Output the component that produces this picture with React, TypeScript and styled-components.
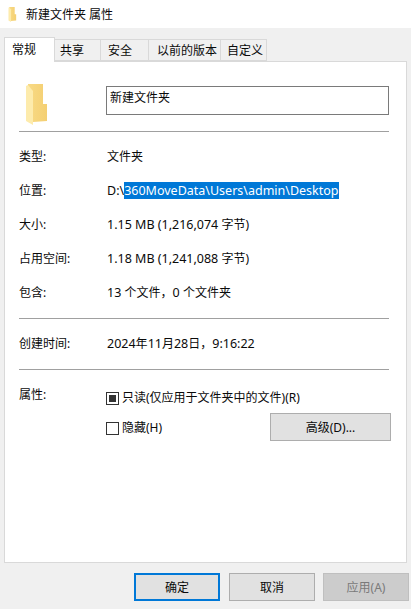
import React from "react";
import styled, { createGlobalStyle } from "styled-components";

const Global = createGlobalStyle`
  html, body { margin: 0; padding: 0; background: #f0f0f0; }
  body { font-family: "Noto Sans", "Noto Sans CJK SC", sans-serif; font-size: 12px; color: #0a0a0a; }
  #root { width: 411px; height: 609px; overflow: hidden; }
`;

const Dialog = styled.div`
  width: 411px;
  height: 609px;
  display: flex;
  flex-direction: column;
  background: #f0f0f0;
`;
const TitleBar = styled.div`
  height: 28px;
  background: #fff;
  display: flex;
  align-items: center;
  gap: 9px;
  padding-left: 8px;
  flex: none;
`;
const TabStrip = styled.div`
  height: 33px;
  flex: none;
  display: flex;
  align-items: flex-end;
  padding: 0 0 0 4px;
  box-sizing: border-box;
  position: relative;
  z-index: 1;
`;
const Tab = styled.div<{ $w: number; $pad: number; $active?: boolean }>`
  width: ${(p) => p.$w}px;
  height: ${(p) => (p.$active ? 25 : 22)}px;
  box-sizing: border-box;
  border: 1px solid #d9d9d9;
  border-left-width: ${(p) => (p.$active ? 1 : 0)}px;
  border-bottom: ${(p) => (p.$active ? "none" : "1px solid #d9d9d9")};
  background: ${(p) => (p.$active ? "#fff" : "#f0f0f0")};
  margin-bottom: ${(p) => (p.$active ? -1 : 0)}px;
  display: flex;
  align-items: center;
  white-space: nowrap;
  padding-left: ${(p) => p.$pad}px;
  padding-bottom: ${(p) => (p.$active ? 3 : 0)}px;
`;
const Panel = styled.div`
  margin: 0 4px;
  width: 403px;
  height: 502px;
  flex: none;
  box-sizing: border-box;
  border: 1px solid #d9d9d9;
  background: #fff;
  padding: 0 17px 0 14px;
  display: flex;
  flex-direction: column;
`;
const Header = styled.div`
  height: 69px;
  flex: none;
  display: flex;
  align-items: flex-start;
  padding-top: 22px;
  box-sizing: border-box;
`;
const IconSlot = styled.div`
  width: 87px;
  padding-left: 7px;
  box-sizing: border-box;
  flex: none;
`;
const NameInput = styled.div`
  width: 283px;
  height: 29px;
  margin-top: 2px;
  box-sizing: border-box;
  border: 1px solid #7a7a7a;
  padding: 0 3px;
  line-height: 22px;
`;
const Rule = styled.div`
  height: 1px;
  flex: none;
  background: #a0a0a0;
`;
const Group = styled.div<{ $h: number }>`
  height: ${(p) => p.$h}px;
  flex: none;
  padding-top: 16px;
  box-sizing: border-box;
`;
const Row = styled.div`
  height: 34px;
  display: flex;
  align-items: flex-start;
  line-height: 18px;
`;
const Label = styled.div`
  width: 88px;
  flex: none;
`;
const AttrLabel = styled(Label)`
  width: 87px;
  line-height: 14px;
`;
const Latin = styled.span`
  font-size: 12.5px;
`;
const Selected = styled.span`
  background: #0078d7;
  color: #fff;
`;
const AttrGrid = styled.div`
  display: flex;
  padding-top: 18px;
`;
const AttrCol = styled.div`
  flex: 1;
  display: flex;
  flex-direction: column;
`;
const CheckRow = styled.div<{ $drop?: number }>`
  display: flex;
  align-items: center;
  gap: 3px;
  height: 20px;
  line-height: 20px;
  padding-top: ${(p) => p.$drop ?? 0}px;
`;
const CheckBox = styled.div<{ $mixed?: boolean }>`
  width: 13px;
  height: 13px;
  box-sizing: border-box;
  border: 1px solid #333;
  background: #fff;
  display: flex;
  align-items: center;
  justify-content: center;
  &::after {
    content: "";
    width: 7px;
    height: 7px;
    background: ${(p) => (p.$mixed ? "#333" : "transparent")};
  }
`;
const SecondLine = styled.div`
  display: flex;
  justify-content: space-between;
  align-items: center;
  margin: 5px -2px 0 0;
`;
const Button = styled.div<{ $w?: number; $focus?: boolean; $disabled?: boolean }>`
  width: ${(p) => p.$w ?? 86}px;
  height: 28px;
  box-sizing: border-box;
  border: ${(p) => (p.$focus ? "2px solid #0078d7" : p.$disabled ? "1px solid #bfbfbf" : "1px solid #adadad")};
  background: ${(p) => (p.$disabled ? "#cccccc" : "#e1e1e1")};
  color: ${(p) => (p.$disabled ? "#7a7a7a" : "#0a0a0a")};
  margin-right: ${(p) => (p.$focus ? 1 : 0)}px;
  display: flex;
  align-items: center;
  justify-content: center;
`;
const Footer = styled.div`
  flex: 1;
  display: flex;
  justify-content: flex-end;
  gap: 8px;
  padding: 10px 2px 0 0;
  box-sizing: border-box;
`;

const Folder: React.FC<{ w: number; h: number; id: string }> = ({ w, h, id }) => (
  <svg width={w} height={h} viewBox="0 0 22 41" style={{ display: "block" }}>
    <defs>
      <linearGradient id={id} x1="0" y1="0" x2="1" y2="0">
        <stop offset="0" stopColor="#f8da85" />
        <stop offset="1" stopColor="#f4cf72" />
      </linearGradient>
    </defs>
    <path d="M2 0 L17 0 L17 20 L21 20 L21 37 L7 38 L2 36 Z" fill={`url(#${id})`} />
    <path d="M0 2 L2 1 L7 7 L7 41 L0 37 Z" fill="#fdebac" />
  </svg>
);

export default function App() {
  return (
    <Dialog>
      <Global />
      <TitleBar>
        <Folder w={9} h={15} id="fs" />
        <span>新建文件夹 属性</span>
      </TitleBar>
      <TabStrip>
        <Tab $w={51} $pad={7} $active>常规</Tab>
        <Tab $w={46} $pad={5}>共享</Tab>
        <Tab $w={48} $pad={7}>安全</Tab>
        <Tab $w={72} $pad={8}>以前的版本</Tab>
        <Tab $w={46} $pad={6}>自定义</Tab>
      </TabStrip>
      <Panel>
        <Header>
          <IconSlot><Folder w={22} h={41} id="fl" /></IconSlot>
          <NameInput>新建文件夹</NameInput>
        </Header>
        <Rule />
        <Group $h={186}>
          <Row><Label>类型:</Label>文件夹</Row>
          <Row><Label>位置:</Label><Latin>D:\<Selected>360MoveData\Users\admin\Desktop</Selected></Latin></Row>
          <Row><Label>大小:</Label><span><Latin>1.15 MB (1,216,074 </Latin>字节)</span></Row>
          <Row><Label>占用空间:</Label><span><Latin>1.18 MB (1,241,088 </Latin>字节)</span></Row>
          <Row><Label>包含:</Label><span><Latin>13 </Latin>个文件，<Latin>0 </Latin>个文件夹</span></Row>
        </Group>
        <Rule />
        <Group $h={50}>
          <Row><Label>创建时间:</Label><span><Latin>2024</Latin>年<Latin>11</Latin>月<Latin>28</Latin>日，<Latin>9:16:22</Latin></span></Row>
        </Group>
        <Rule />
        <AttrGrid>
          <AttrLabel>属性:</AttrLabel>
          <AttrCol>
            <CheckRow><CheckBox $mixed />只读(仅应用于文件夹中的文件)(R)</CheckRow>
            <SecondLine>
              <CheckRow $drop={2}><CheckBox />隐藏(H)</CheckRow>
              <Button $w={121}>高级(D)...</Button>
            </SecondLine>
          </AttrCol>
        </AttrGrid>
      </Panel>
      <Footer>
        <Button $focus>确定</Button>
        <Button>取消</Button>
        <Button $disabled>应用(A)</Button>
      </Footer>
    </Dialog>
  );
}
